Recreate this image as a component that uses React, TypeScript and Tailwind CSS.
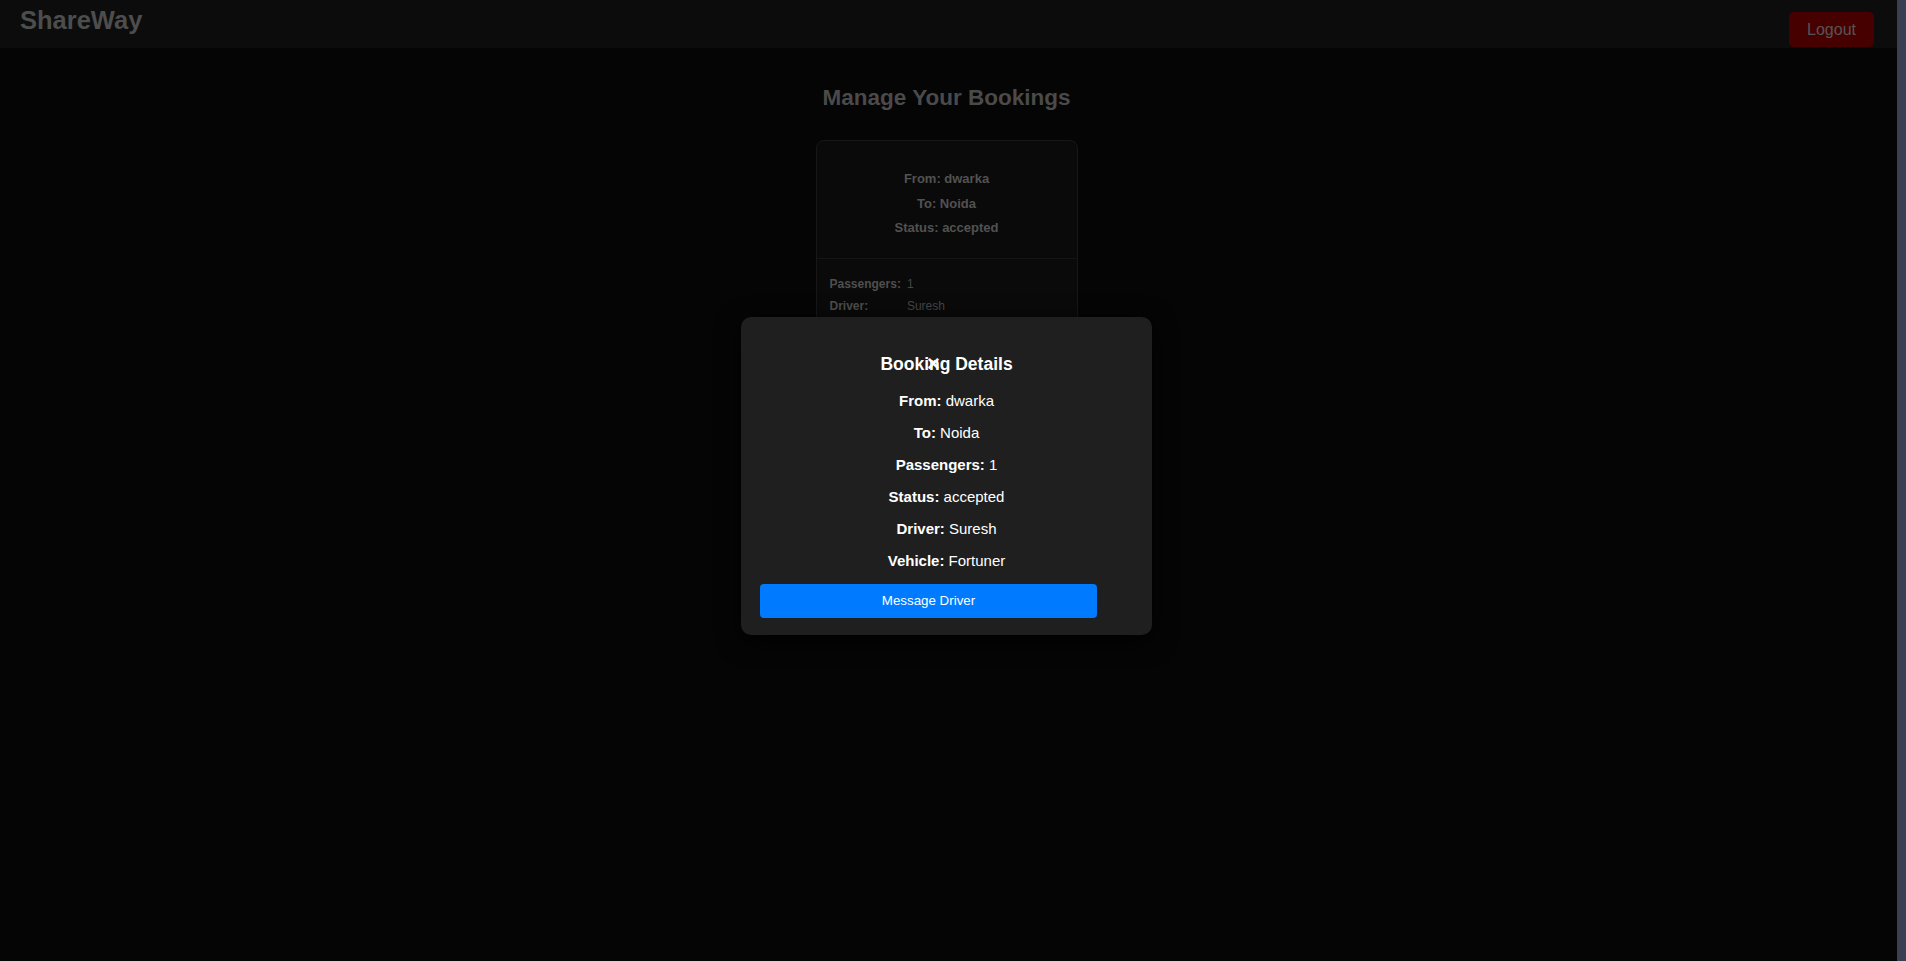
import React from "react";

export default function App() {
  return (
    <div
      className="h-screen w-full flex bg-[#050505] overflow-hidden"
      style={{ fontFamily: '"Liberation Sans", Arial, sans-serif' }}
    >
      <div className="flex-1 relative flex flex-col">
        <nav className="h-12 bg-[#0c0c0c] flex items-start justify-between pl-5 pr-[23px]">
          <div className="mt-[6px] text-[25.5px] font-bold text-[#4d4d4d] leading-[29px]">ShareWay</div>
          <button className="mt-3 h-[35px] w-[85px] rounded-[5px] bg-[#470000] text-[16px] text-[#555555]">
            Logout
          </button>
        </nav>

        <main className="flex flex-col items-center pr-1">
          <h2 className="mt-[37px] text-[22.5px] font-bold leading-[25px] text-[#4a4a4a]">Manage Your Bookings</h2>
          <div className="mt-[30px] w-[262px] rounded-lg border border-[#171717] bg-[#0a0a0a]">
            <div className="pt-[26px] pb-[17px] flex flex-col items-center text-[13px] font-bold leading-[24.5px] text-[#525252]">
              <div>From: dwarka</div>
              <div>To: Noida</div>
              <div>Status: accepted</div>
            </div>
            <div className="border-t border-[#151515] px-[13px] pt-[14px] pb-6">
              <div className="grid grid-cols-[auto_1fr] gap-x-[6px] text-[12px] leading-[22px] text-[#474747]">
                <span className="font-bold text-[#4f4f4f]">Passengers:</span>
                <span>1</span>
                <span className="font-bold text-[#4f4f4f]">Driver:</span>
                <span>Suresh</span>
                <span className="font-bold text-[#4f4f4f]">Vehicle:</span>
                <span>Fortuner</span>
              </div>
              <button className="mt-3 h-[30px] w-full rounded bg-[#0a1a2a] text-[12px] text-[#4a4a4a]">View Details</button>
            </div>
          </div>
        </main>

        <div className="absolute inset-0 flex justify-center items-start pt-[317px] pr-1">
          <div className="relative w-[411px] h-[318px] rounded-[10px] bg-[#1f1f1f] shadow-[0_6px_24px_rgba(0,0,0,0.9)] pt-[37px] pl-[19px] pr-[55px] pb-[17px] flex flex-col">
            <span className="absolute left-[186px] top-[35px] text-[22px] font-bold leading-[24px] text-white">×</span>
            <div className="-mr-9 text-center text-[17.5px] font-bold leading-5 text-white mb-[11px]">Booking Details</div>
            <div className="-mr-9 flex flex-col items-center text-[15px] leading-8 text-white">
              <div><span className="font-bold">From:</span> dwarka</div>
              <div><span className="font-bold">To:</span> Noida</div>
              <div><span className="font-bold">Passengers:</span> 1</div>
              <div><span className="font-bold">Status:</span> accepted</div>
              <div><span className="font-bold">Driver:</span> Suresh</div>
              <div><span className="font-bold">Vehicle:</span> Fortuner</div>
            </div>
            <button className="mt-[7px] h-[34px] w-[337px] rounded-[4px] bg-[#007bff] text-[13.33px] text-white">
              Message Driver
            </button>
          </div>
        </div>
      </div>
      <div className="w-[9px] h-full bg-[#3b3f52]" />
    </div>
  );
}
